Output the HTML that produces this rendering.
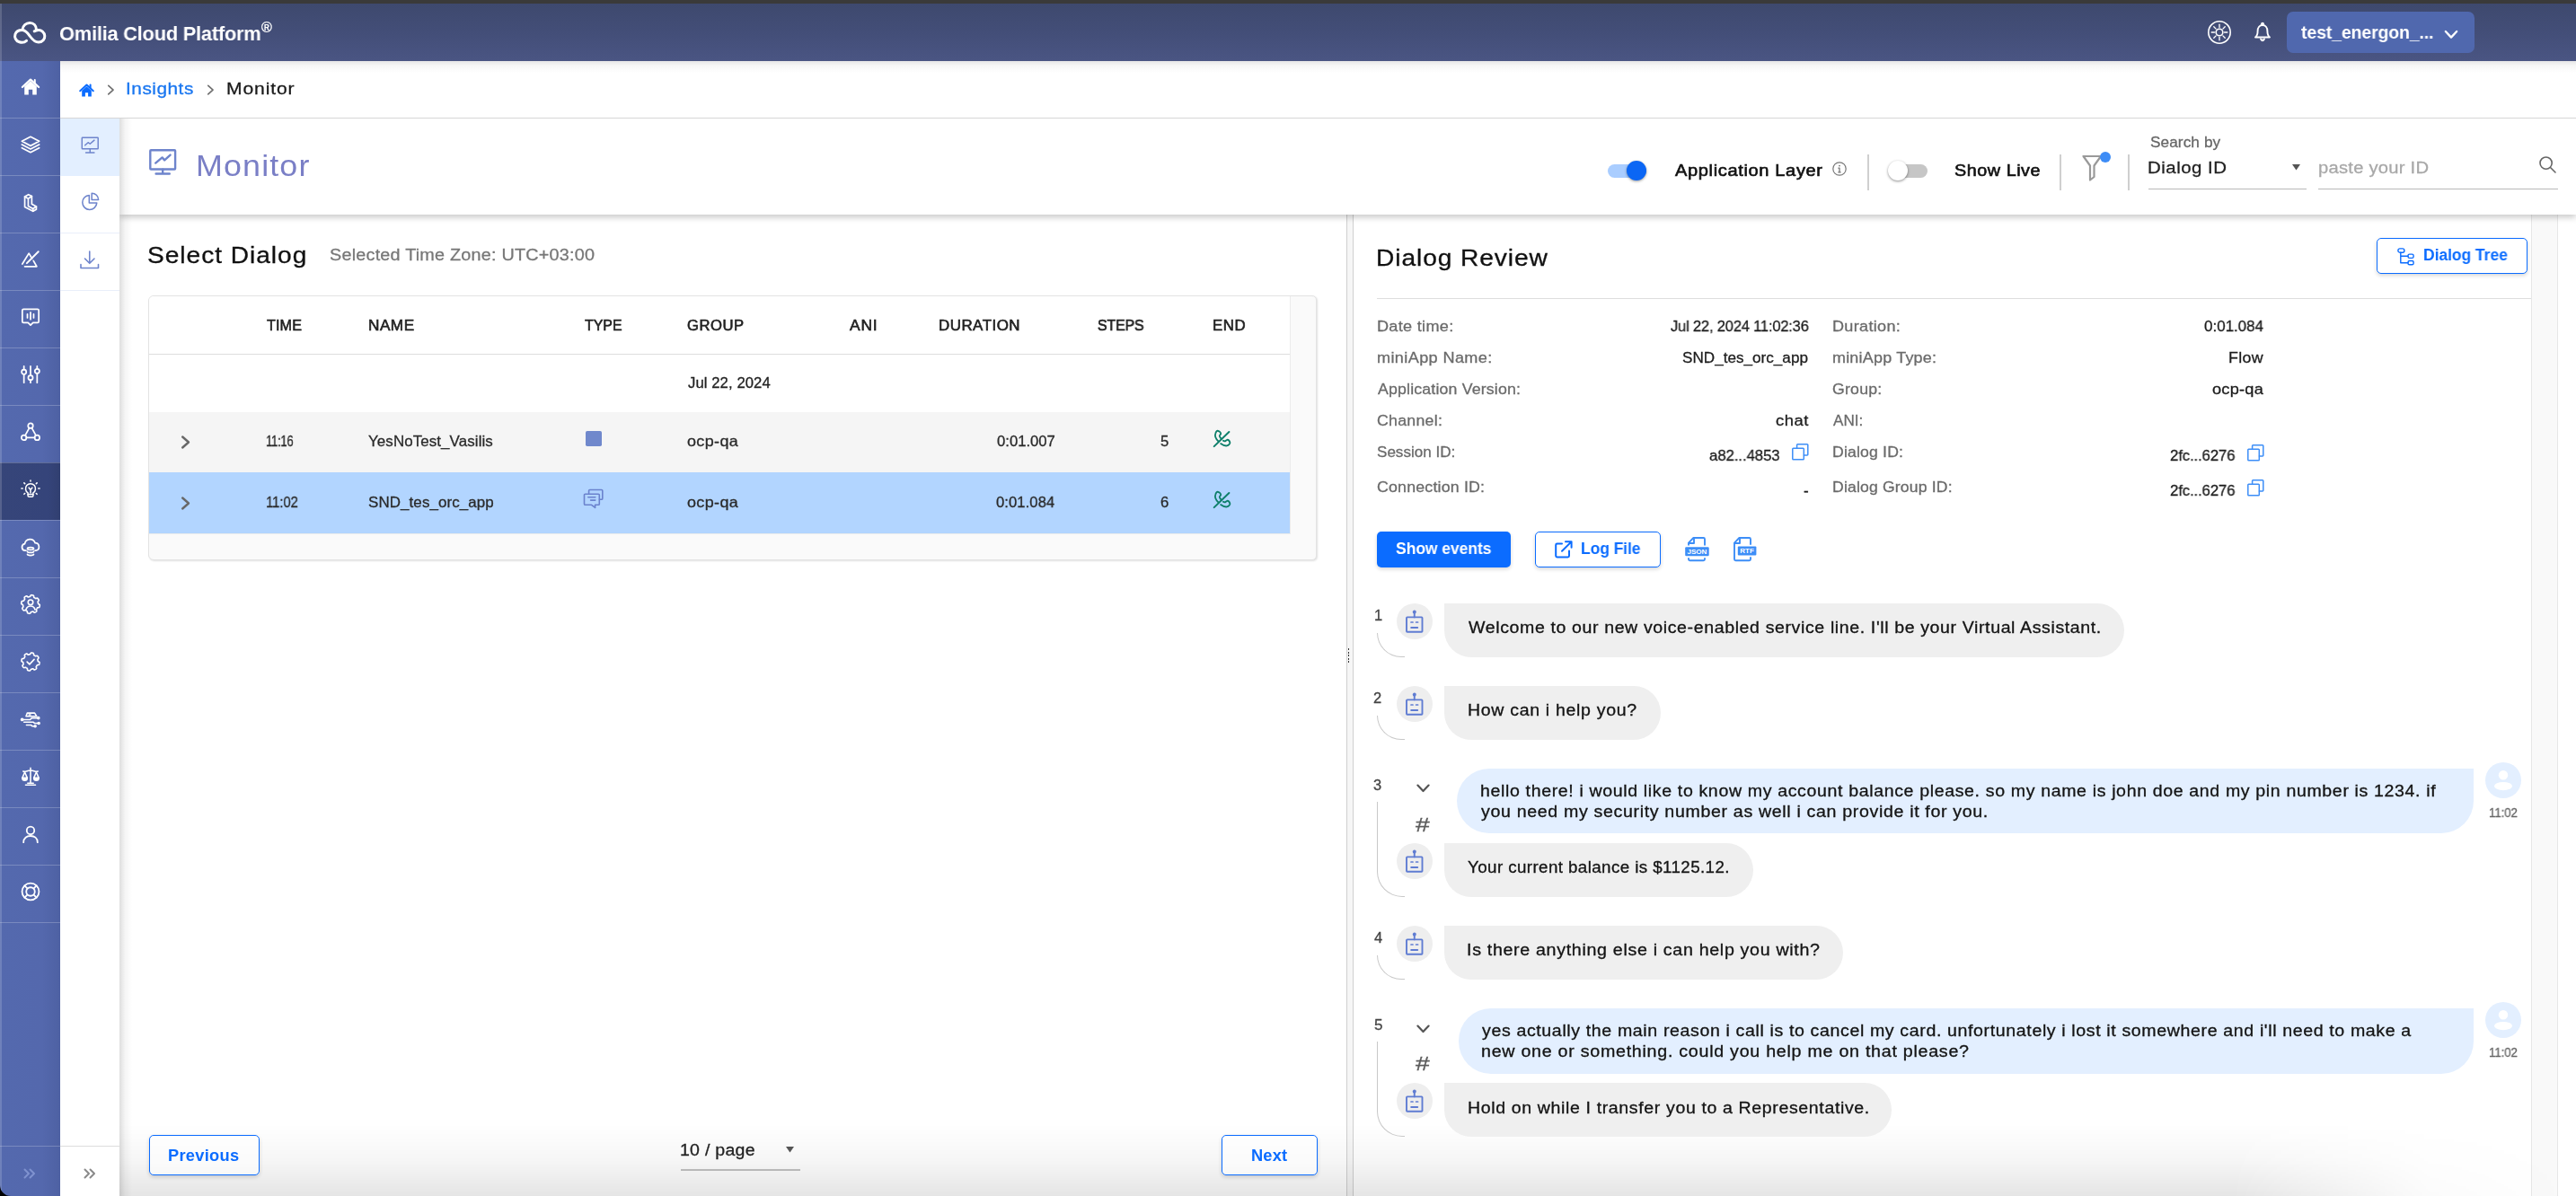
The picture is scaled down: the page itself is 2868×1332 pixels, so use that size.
<!DOCTYPE html>
<html lang="en"><head><meta charset="utf-8"><title>Omilia Cloud Platform - Monitor</title>
<style>
*{box-sizing:border-box}
html,body{margin:0;padding:0}
body{width:2868px;height:1332px;overflow:hidden;background:#fff;position:relative;font-family:"Liberation Sans",sans-serif;color:#222}
.b{position:absolute}
.i{position:absolute;overflow:visible}
.t{position:absolute;will-change:transform;white-space:pre;line-height:1;color:#222;transform-origin:0 0}
.m{-webkit-text-stroke:.3px currentColor}
.m5{-webkit-text-stroke:.6px currentColor}
.topbar{background:linear-gradient(180deg,#3e496e 0%,#434e78 50%,#4a5583 100%)}
.sidebar{background:linear-gradient(90deg,#5469ae 0%,#5468ad 70%,#4e61a3 100%)}
.sdiv{position:absolute;left:0;width:67px;height:1px;background:rgba(255,255,255,.22)}
.s2div{position:absolute;left:67px;width:66px;height:1px;background:#e9eefa}
.hdr{background:#fff;box-shadow:0 3px 7px rgba(0,0,0,.22);clip-path:inset(0 0 -20px 0)}
.vdiv{position:absolute;width:2px;height:40px;top:172px;background:#cfcfcf}
.btn{border-radius:5px;box-shadow:0 2px 4px rgba(0,0,0,.16)}
.btn.o{background:#fff;border:1.25px solid #0b6cff}
.btn.f{background:#0b6cff}
.bub{position:absolute;background:#efefef;border-radius:0 30px 30px 30px}
.bub.u{background:#e3efff;border-radius:36px 0 36px 36px}
.av{position:absolute;width:40px;height:40px;border-radius:50%;background:#eeeeee}
.av.u{background:#e3efff}
.conn{position:absolute;border-left:1.2px solid #c8c8c8;border-bottom:1.2px solid #c8c8c8;border-bottom-left-radius:28px}
</style></head>
<body>
<div class="b " style="left:0px;top:0px;width:2868px;height:4px;background:#3a3a3a"></div>
<div class="b topbar" style="left:0px;top:4px;width:2868px;height:64px;"></div>
<svg class="i" style="left:0px;top:0px;" width="70" height="68" viewBox="0 0 70 68" fill="none" stroke="#fff" stroke-width="3" stroke-linecap="round" stroke-linejoin="round"><path d="M29.5 45.3C27.5 47.2 24 47.6 21.5 46.8C17.5 45.5 15.8 41.5 17 38C18.2 34.8 21.5 33.4 25 33.5C29 33.8 31 37 33.5 40.5C36 44 38.5 47 43 47.1C47.5 47 50 43.5 49.8 40C49.5 36 46 33.2 42.5 33.6C40.8 33.8 39.2 34.3 38.2 34.8"/><path d="M24.8 33.4C25.5 28.5 29 25.4 33.2 25.4C37.5 25.4 40.3 28.5 40.4 32.6"/></svg>
<span class="t" style="left:65.70px;top:27px;font-size:22.6px;letter-spacing:-0.258px;transform:scaleX(0.9681);font-weight:700;color:#fff;">Omilia Cloud Platform</span>
<span class="t m" style="left:291.00px;top:23px;font-size:16.0px;color:#fff;">&#174;</span>
<svg class="i" style="left:2458px;top:23px;" width="26" height="26" viewBox="0 0 26 26" fill="none" stroke="#fff" stroke-width="1.6" stroke-linecap="round" stroke-linejoin="round"><circle cx="13" cy="13" r="12.2"/><circle cx="13" cy="13" r="3.8"/><g stroke-width="1.35"><line x1="18.50" y1="13.00" x2="21.80" y2="13.00"/><line x1="16.89" y1="16.89" x2="19.22" y2="19.22"/><line x1="13.00" y1="18.50" x2="13.00" y2="21.80"/><line x1="9.11" y1="16.89" x2="6.78" y2="19.22"/><line x1="7.50" y1="13.00" x2="4.20" y2="13.00"/><line x1="9.11" y1="9.11" x2="6.78" y2="6.78"/><line x1="13.00" y1="7.50" x2="13.00" y2="4.20"/><line x1="16.89" y1="9.11" x2="19.22" y2="6.78"/></g></svg>
<svg class="i" style="left:2508px;top:24px;" width="22" height="24" viewBox="0 0 22 24" fill="none" stroke="#fff" stroke-width="1.9" stroke-linecap="round" stroke-linejoin="round"><path d="M3 17.5C5 16 5.6 14 5.6 10.5C5.6 6.5 7.8 4 11 4C14.2 4 16.4 6.5 16.4 10.5C16.4 14 17 16 19 17.5Z"/><path d="M9 19.5C9.5 20.8 10.2 21.3 11 21.3C11.8 21.3 12.5 20.8 13 19.5" fill="#fff"/><circle cx="11" cy="2.6" r="1" fill="#fff"/></svg>
<div class="b " style="left:2546px;top:13px;width:209px;height:46px;background:#5068ae;border-radius:7px"></div>
<span class="t" style="left:2562.00px;top:27px;font-size:19.8px;letter-spacing:-0.106px;transform:scaleX(0.9825);font-weight:700;color:#fff;">test_energon_...</span>
<svg class="i" style="left:2721px;top:33px;" width="16" height="11" viewBox="0 0 16 11" fill="none" stroke="#fff" stroke-width="2.3" stroke-linecap="round" stroke-linejoin="round"><path d="M1.8 2L8 8.6L14.2 2"/></svg>
<div class="b sidebar" style="left:0px;top:68px;width:67px;height:1264px;"></div>
<div class="b " style="left:0px;top:515px;width:67px;height:64px;background:linear-gradient(90deg,#364579 0%,#35447a 80%,#313f70 100%)"></div>
<div class="sdiv" style="top:131px"></div>
<div class="sdiv" style="top:195px"></div>
<div class="sdiv" style="top:259px"></div>
<div class="sdiv" style="top:323px"></div>
<div class="sdiv" style="top:387px"></div>
<div class="sdiv" style="top:451px"></div>
<div class="sdiv" style="top:515px"></div>
<div class="sdiv" style="top:579px"></div>
<div class="sdiv" style="top:643px"></div>
<div class="sdiv" style="top:707px"></div>
<div class="sdiv" style="top:771px"></div>
<div class="sdiv" style="top:835px"></div>
<div class="sdiv" style="top:899px"></div>
<div class="sdiv" style="top:963px"></div>
<div class="sdiv" style="top:1027px"></div>
<div class="sdiv" style="top:1276px"></div>
<div class="b " style="left:0px;top:4px;width:2px;height:1328px;background:rgba(255,255,255,.16)"></div>
<svg class="i" style="left:22.5px;top:86px;" width="22" height="22" viewBox="0 0 24 24" fill="none" stroke="#fff" stroke-width="2.4" stroke-linecap="round" stroke-linejoin="round"><path d="M2 12L12 2.8L22 12" /><path d="M4.6 11.3V21.4H9.6V15H14.4V21.4H19.4V11.3L12 4.6Z" fill="#fff" stroke="none"/><path d="M17.2 3.2V7" stroke-width="2.2"/></svg>
<svg class="i" style="left:22.5px;top:150px;" width="22" height="22" viewBox="0 0 24 24" fill="none" stroke="#fff" stroke-width="1.9" stroke-linecap="round" stroke-linejoin="round"><path d="M12 2.5L22.5 8L12 13.5L1.5 8Z"/><path d="M1.5 12L12 17.5L22.5 12"/><path d="M1.5 16L12 21.5L22.5 16"/></svg>
<svg class="i" style="left:22.5px;top:214px;" width="22" height="22" viewBox="0 0 24 24" fill="none" stroke="#fff" stroke-width="1.9" stroke-linecap="round" stroke-linejoin="round"><path d="M5 5.5L9.5 3L13.5 5V14.5L19 17.5V21L15 23.2L5 18Z"/><path d="M5 5.5L9.2 7.8L13.5 5M9.2 7.8V17L15 20.2L19 17.5M15 20.2V23"/></svg>
<svg class="i" style="left:22.5px;top:278px;" width="22" height="22" viewBox="0 0 24 24" fill="none" stroke="#fff" stroke-width="1.9" stroke-linecap="round" stroke-linejoin="round"><path d="M2 17.5L10 4.5L13.8 10.8M15.5 13.5L19.5 20.5H5"/><path d="M7.5 16.5L21.5 2.5" stroke-width="2.2"/></svg>
<svg class="i" style="left:22.5px;top:342px;" width="22" height="22" viewBox="0 0 24 24" fill="none" stroke="#fff" stroke-width="1.9" stroke-linecap="round" stroke-linejoin="round"><path d="M3.5 2.5H20.5A1.5 1.5 0 0 1 22 4V17.5A1.5 1.5 0 0 1 20.5 19H15L12 22L9 19H3.5A1.5 1.5 0 0 1 2 17.5V4A1.5 1.5 0 0 1 3.5 2.5Z"/><path d="M8.2 8.5V13M12 6.5V15M15.8 8.5V13"/></svg>
<svg class="i" style="left:22.5px;top:406px;" width="22" height="22" viewBox="0 0 24 24" fill="none" stroke="#fff" stroke-width="1.9" stroke-linecap="round" stroke-linejoin="round"><path d="M4 2V6M4 12V22M12 2V13M12 19V22M20 2V5M20 11V22"/><circle cx="4" cy="9" r="2.8"/><circle cx="12" cy="16" r="2.8"/><circle cx="20" cy="8" r="2.8"/></svg>
<svg class="i" style="left:22.5px;top:470px;" width="22" height="22" viewBox="0 0 24 24" fill="none" stroke="#fff" stroke-width="1.9" stroke-linecap="round" stroke-linejoin="round"><circle cx="12" cy="4.5" r="3"/><circle cx="4" cy="19" r="3"/><circle cx="20" cy="19" r="3"/><path d="M10.5 7.2L5.5 16.3M13.5 7.2L18.5 16.3M7 19H17"/></svg>
<svg class="i" style="left:22.5px;top:534px;" width="22" height="22" viewBox="0 0 24 24" fill="none" stroke="#fff" stroke-width="1.7" stroke-linecap="round" stroke-linejoin="round"><path d="M8.8 16.2A6 6 0 1 1 15.2 16.2V19.5A1.5 1.5 0 0 1 13.7 21H10.3A1.5 1.5 0 0 1 8.8 19.5Z"/><path d="M10 10L12 12.5L14 10M12 12.5V16M9 18H15"/><path d="M12 1V2.2M4.2 4.2L5.1 5.1M19.8 4.2L18.9 5.1M1 11H2.4M23 11H21.6M4.2 17.8L5.1 16.9M19.8 17.8L18.9 16.9"/></svg>
<svg class="i" style="left:22.5px;top:599px;" width="22" height="22" viewBox="0 0 24 24" fill="none" stroke="#fff" stroke-width="1.9" stroke-linecap="round" stroke-linejoin="round"><path d="M6.5 15.5H5.5A4.2 4.2 0 0 1 5 7.2A6.5 6.5 0 0 1 17.6 6.2A4.7 4.7 0 0 1 18.5 15.5H17.5"/><ellipse cx="12" cy="13" rx="3.8" ry="1.5"/><path d="M8.2 16.5C8.2 18.3 15.8 18.3 15.8 16.5M8.2 20C8.2 21.8 15.8 21.8 15.8 20"/></svg>
<svg class="i" style="left:22.5px;top:662px;" width="22" height="22" viewBox="0 0 24 24" fill="none" stroke="#fff" stroke-width="1.8" stroke-linecap="round" stroke-linejoin="round"><path d="M21.52 15.94 L20.55 16.04 L20.20 16.38 L19.98 16.78 L19.73 17.17 L19.47 17.54 L19.19 17.90 L19.01 18.35 L19.28 19.28 L19.48 20.26 L19.17 20.74 L18.73 21.08 L18.28 21.40 L17.81 21.69 L17.33 21.97 L16.76 22.07 L15.94 21.52 L15.19 20.91 L14.70 20.90 L14.26 21.02 L13.81 21.12 L13.36 21.20 L12.91 21.26 L12.46 21.45 L12.00 22.30 L11.45 23.13 L10.89 23.25 L10.34 23.18 L9.80 23.08 L9.25 22.96 L8.72 22.81 L8.25 22.49 L8.06 21.52 L7.96 20.55 L7.62 20.20 L7.22 19.98 L6.83 19.73 L6.46 19.47 L6.10 19.19 L5.65 19.01 L4.72 19.28 L3.74 19.48 L3.26 19.17 L2.92 18.73 L2.60 18.28 L2.31 17.81 L2.03 17.33 L1.93 16.76 L2.48 15.94 L3.09 15.19 L3.10 14.70 L2.98 14.26 L2.88 13.81 L2.80 13.36 L2.74 12.91 L2.55 12.46 L1.70 12.00 L0.87 11.45 L0.75 10.89 L0.82 10.34 L0.92 9.80 L1.04 9.25 L1.19 8.72 L1.51 8.25 L2.48 8.06 L3.45 7.96 L3.80 7.62 L4.02 7.22 L4.27 6.83 L4.53 6.46 L4.81 6.10 L4.99 5.65 L4.72 4.72 L4.52 3.74 L4.83 3.26 L5.27 2.92 L5.72 2.60 L6.19 2.31 L6.67 2.03 L7.24 1.93 L8.06 2.48 L8.81 3.09 L9.30 3.10 L9.74 2.98 L10.19 2.88 L10.64 2.80 L11.09 2.74 L11.54 2.55 L12.00 1.70 L12.55 0.87 L13.11 0.75 L13.66 0.82 L14.20 0.92 L14.75 1.04 L15.28 1.19 L15.75 1.51 L15.94 2.48 L16.04 3.45 L16.38 3.80 L16.78 4.02 L17.17 4.27 L17.54 4.53 L17.90 4.81 L18.35 4.99 L19.28 4.72 L20.26 4.52 L20.74 4.83 L21.08 5.27 L21.40 5.72 L21.69 6.19 L21.97 6.67 L22.07 7.24 L21.52 8.06 L20.91 8.81 L20.90 9.30 L21.02 9.74 L21.12 10.19 L21.20 10.64 L21.26 11.09 L21.45 11.54 L22.30 12.00 L23.13 12.55 L23.25 13.11 L23.18 13.66 L23.08 14.20 L22.96 14.75 L22.81 15.28 L22.49 15.75 L21.52 15.94Z"/><circle cx="12" cy="9.5" r="3"/><path d="M6.5 18.5C7.5 15 9.5 14.2 12 14.2C14.5 14.2 16.5 15 17.5 18.5"/></svg>
<svg class="i" style="left:22.5px;top:726px;" width="22" height="22" viewBox="0 0 24 24" fill="none" stroke="#fff" stroke-width="1.8" stroke-linecap="round" stroke-linejoin="round"><path d="M21.24 15.83 L20.28 15.92 L19.94 16.24 L19.72 16.63 L19.48 17.00 L19.23 17.36 L18.96 17.71 L18.79 18.15 L19.07 19.07 L19.28 20.03 L18.98 20.50 L18.55 20.84 L18.11 21.15 L17.66 21.44 L17.19 21.70 L16.64 21.80 L15.83 21.24 L15.09 20.62 L14.61 20.61 L14.19 20.73 L13.76 20.83 L13.32 20.90 L12.88 20.96 L12.45 21.15 L12.00 22.00 L11.47 22.83 L10.92 22.95 L10.39 22.88 L9.85 22.79 L9.33 22.67 L8.81 22.53 L8.35 22.21 L8.17 21.24 L8.08 20.28 L7.76 19.94 L7.37 19.72 L7.00 19.48 L6.64 19.23 L6.29 18.96 L5.85 18.79 L4.93 19.07 L3.97 19.28 L3.50 18.98 L3.16 18.55 L2.85 18.11 L2.56 17.66 L2.30 17.19 L2.20 16.64 L2.76 15.83 L3.38 15.09 L3.39 14.61 L3.27 14.19 L3.17 13.76 L3.10 13.32 L3.04 12.88 L2.85 12.45 L2.00 12.00 L1.17 11.47 L1.05 10.92 L1.12 10.39 L1.21 9.85 L1.33 9.33 L1.47 8.81 L1.79 8.35 L2.76 8.17 L3.72 8.08 L4.06 7.76 L4.28 7.37 L4.52 7.00 L4.77 6.64 L5.04 6.29 L5.21 5.85 L4.93 4.93 L4.72 3.97 L5.02 3.50 L5.45 3.16 L5.89 2.85 L6.34 2.56 L6.81 2.30 L7.36 2.20 L8.17 2.76 L8.91 3.38 L9.39 3.39 L9.81 3.27 L10.24 3.17 L10.68 3.10 L11.12 3.04 L11.55 2.85 L12.00 2.00 L12.53 1.17 L13.08 1.05 L13.61 1.12 L14.15 1.21 L14.67 1.33 L15.19 1.47 L15.65 1.79 L15.83 2.76 L15.92 3.72 L16.24 4.06 L16.63 4.28 L17.00 4.52 L17.36 4.77 L17.71 5.04 L18.15 5.21 L19.07 4.93 L20.03 4.72 L20.50 5.02 L20.84 5.45 L21.15 5.89 L21.44 6.34 L21.70 6.81 L21.80 7.36 L21.24 8.17 L20.62 8.91 L20.61 9.39 L20.73 9.81 L20.83 10.24 L20.90 10.68 L20.96 11.12 L21.15 11.55 L22.00 12.00 L22.83 12.53 L22.95 13.08 L22.88 13.61 L22.79 14.15 L22.67 14.67 L22.53 15.19 L22.21 15.65 L21.24 15.83Z"/><path d="M7.8 12.2L10.8 15.2L16.4 9.2"/></svg>
<svg class="i" style="left:22.5px;top:790px;" width="22" height="22" viewBox="0 0 24 24" fill="none" stroke="#fff" stroke-width="1.7" stroke-linecap="round" stroke-linejoin="round"><path d="M8 4.5H17L19.5 8.5H6.5Z"/><path d="M10 6.5H12M1.5 12.5H11.5L13.5 10.5H20.5M4 15.5H15.5L17 17H21M7 19H12.5L14 20.5H16.5"/><circle cx="1.8" cy="12.5" r="1.2" fill="#fff"/><circle cx="21.6" cy="10.5" r="1.1"/><circle cx="22" cy="17" r="1.1"/><circle cx="17.6" cy="20.5" r="1.1"/></svg>
<svg class="i" style="left:22.5px;top:854px;" width="22" height="22" viewBox="0 0 24 24" fill="none" stroke="#fff" stroke-width="1.7" stroke-linecap="round" stroke-linejoin="round"><path d="M12 1.5V20M6 22H18M8.5 20H15.5M3 5.5C6 6.5 9 4 12 4.5C15 4 18 6.5 21 5.5"/><path d="M5 6.5L2 13.5H8ZM19 6.5L16 13.5H22Z"/><path d="M2 13.5A3 3 0 0 0 8 13.5M16 13.5A3 3 0 0 0 22 13.5" fill="#fff"/></svg>
<svg class="i" style="left:22.5px;top:918px;" width="22" height="22" viewBox="0 0 24 24" fill="none" stroke="#fff" stroke-width="2" stroke-linecap="round" stroke-linejoin="round"><circle cx="12" cy="7.5" r="4.6"/><path d="M3.5 22C3.5 16.5 7.5 14.2 12 14.2C16.5 14.2 20.5 16.5 20.5 22"/></svg>
<svg class="i" style="left:22.5px;top:982px;" width="22" height="22" viewBox="0 0 24 24" fill="none" stroke="#fff" stroke-width="2" stroke-linecap="round" stroke-linejoin="round"><circle cx="12" cy="12" r="10.3"/><circle cx="12" cy="12" r="5.2"/><path d="M4.8 4.8L8.3 8.3M19.2 4.8L15.7 8.3M4.8 19.2L8.3 15.7M19.2 19.2L15.7 15.7"/></svg>
<svg class="i" style="left:26px;top:1301px;" width="14" height="12" viewBox="0 0 14 12" fill="none" stroke="#7f92cf" stroke-width="2" stroke-linecap="round" stroke-linejoin="round"><path d="M1.5 1.5L6 6L1.5 10.5M7.5 1.5L12 6L7.5 10.5"/></svg>
<div class="b " style="left:67px;top:68px;width:2801px;height:63px;background:linear-gradient(180deg,#e6e6e6 0px,#f6f6f6 5px,#fff 13px)"></div>
<div class="b " style="left:67px;top:130.5px;width:2801px;height:1.5px;background:#d6d6d6"></div>
<svg class="i" style="left:87.5px;top:92.5px;" width="17" height="15" viewBox="0 0 17 15" fill="none" stroke="#0b6cff" stroke-width="2" stroke-linecap="round" stroke-linejoin="round"><path d="M1.2 8.2L8.5 1.5L15.8 8.2"/><path d="M3.2 7.9V14.6H6.9V10.2H10.1V14.6H13.8V7.9L8.5 3.2Z" fill="#0b6cff" stroke="none"/><path d="M12.6 1.6V4.4"/></svg>
<svg class="i" style="left:118.6px;top:93.8px;" width="8.8" height="12.3" viewBox="0 0 10 14" fill="none" stroke="#707070" stroke-width="1.9" stroke-linecap="round" stroke-linejoin="round"><path d="M2 1.5L8 7L2 12.5"/></svg>
<span class="t m" style="left:140.00px;top:89px;font-size:19.21px;letter-spacing:0.474px;transform:scaleX(1.0844);color:#1976f0;">Insights</span>
<svg class="i" style="left:229.6px;top:93.8px;" width="8.8" height="12.3" viewBox="0 0 10 14" fill="none" stroke="#707070" stroke-width="1.9" stroke-linecap="round" stroke-linejoin="round"><path d="M2 1.5L8 7L2 12.5"/></svg>
<span class="t m" style="left:251.50px;top:89px;font-size:19.21px;letter-spacing:0.788px;transform:scaleX(1.1000);color:#1a1a1a;">Monitor</span>
<div class="b " style="left:67px;top:132px;width:66px;height:1200px;background:#fff"></div>
<div class="b " style="left:67px;top:132px;width:66px;height:63.8px;background:#e3efff"></div>
<div class="s2div" style="top:259px"></div>
<div class="s2div" style="top:323px"></div>
<div class="b " style="left:67px;top:1276px;width:66px;height:1px;background:#dcdcdc"></div>
<svg class="i" style="left:89.5px;top:151.5px;" width="20.5" height="19" viewBox="0 0 24 22.2" fill="none" stroke="#6e84cc" stroke-width="1.7" stroke-linecap="round" stroke-linejoin="round"><rect x="1.5" y="1.5" width="21" height="14.5" rx="0.6"/><path d="M12 16V20.5M6.5 21H17.5"/><path d="M5.5 11.5L9.5 7.8L12 9.6L17.5 4.8"/></svg>
<svg class="i" style="left:89.5px;top:214px;" width="21" height="20.5" viewBox="0 0 21.5 21.5" fill="none" stroke="#6e84cc" stroke-width="1.6" stroke-linecap="round" stroke-linejoin="round"><path d="M9.5 3.6A8.4 8.4 0 1 0 18.4 12.5H9.5Z"/><path d="M12.5 1.2A7.8 7.8 0 0 1 20.3 9H12.5Z"/></svg>
<svg class="i" style="left:89px;top:279px;" width="21.5" height="20.5" viewBox="0 0 21.5 20.5" fill="none" stroke="#6e84cc" stroke-width="1.6" stroke-linecap="round" stroke-linejoin="round"><path d="M10.75 1V14M5.5 9L10.75 14.3L16 9"/><path d="M1 15.5V19.5H20.5V15.5"/></svg>
<svg class="i" style="left:93px;top:1301px;" width="14" height="12" viewBox="0 0 14 12" fill="none" stroke="#8a8a8a" stroke-width="2" stroke-linecap="round" stroke-linejoin="round"><path d="M1.5 1.5L6 6L1.5 10.5M7.5 1.5L12 6L7.5 10.5"/></svg>
<div class="b " style="left:133px;top:239px;width:2735px;height:1093px;background:#fff"></div>
<div class="b " style="left:2818px;top:239px;width:30px;height:1093px;background:#f9f9f9;border-left:1.5px solid #e7e7e7;border-right:1.5px solid #e7e7e7"></div>
<div class="b " style="left:1499px;top:239px;width:8px;height:1093px;background:#f6f6f6;border-left:1.3px solid #cfcfcf;border-right:1.3px solid #cfcfcf"></div>
<div class="b hdr" style="left:133px;top:132px;width:2735px;height:107px;"></div>
<svg class="i" style="left:165.8px;top:166.3px;" width="30.4" height="28.8" viewBox="0 0 30.4 28.8" fill="none" stroke="#6e84cc" stroke-width="2.4" stroke-linecap="round" stroke-linejoin="round"><rect x="1.3" y="1.3" width="27.8" height="21.2" rx="0.8"/><path d="M15.2 22.6V27M7.6 27.5H22.8"/><path d="M7.2 15.6L14.6 9.4L17.2 12.4L23.6 6.6"/></svg>
<span class="t" style="left:218.20px;top:169px;font-size:32.6px;letter-spacing:1.017px;transform:scaleX(1.1017);color:#7a7fc6;">Monitor</span>
<div class="b " style="left:1790px;top:182.5px;width:43px;height:15px;background:#a9cdff;border-radius:8px"></div>
<div class="b " style="left:1811px;top:178.7px;width:22px;height:22px;background:#0b66f4;border-radius:50%;box-shadow:0 1px 3px rgba(0,0,0,.4)"></div>
<span class="t m5" style="left:1865.00px;top:181px;font-size:18.14px;letter-spacing:0.564px;transform:scaleX(1.1079);color:#111;">Application Layer</span>
<svg class="i" style="left:2040px;top:180px;" width="16" height="16" viewBox="0 0 16 16" fill="none" stroke="#777" stroke-width="1.2" stroke-linecap="round" stroke-linejoin="round"><circle cx="8" cy="8" r="7.2"/><path d="M8 7.2V11.6M6.8 11.8H9.2M6.9 7.2H8" stroke-width="1.3"/><circle cx="8" cy="4.6" r="0.9" fill="#777" stroke="none"/></svg>
<div class="vdiv" style="left:2079px"></div>
<div class="b " style="left:2102.5px;top:182.5px;width:43px;height:15px;background:#c6c6c6;border-radius:8px"></div>
<div class="b " style="left:2101.5px;top:178.7px;width:22px;height:22px;background:#fff;border-radius:50%;box-shadow:0 1px 3px rgba(0,0,0,.45)"></div>
<span class="t m5" style="left:2176.00px;top:181px;font-size:18.14px;letter-spacing:0.505px;transform:scaleX(1.0896);color:#111;">Show Live</span>
<div class="vdiv" style="left:2293px"></div>
<svg class="i" style="left:2318px;top:172px;" width="24" height="30" viewBox="0 0 24 30" fill="none" stroke="#999" stroke-width="2.2" stroke-linecap="round" stroke-linejoin="round"><path d="M1.5 2H21L13.5 12.5V25L9 28.5V12.5Z"/></svg>
<div class="b " style="left:2338px;top:169px;width:12px;height:12px;background:#3d8cf6;border-radius:50%"></div>
<div class="vdiv" style="left:2369px"></div>
<span class="t m" style="left:2394.00px;top:151px;font-size:16.88px;letter-spacing:0.093px;transform:scaleX(1.0192);color:#666;">Search by</span>
<span class="t m" style="left:2391.00px;top:177px;font-size:19.21px;letter-spacing:0.494px;transform:scaleX(1.0623);">Dialog ID</span>
<svg class="i" style="left:2552px;top:183px;" width="9" height="7" viewBox="0 0 9 7" fill="none" stroke-linecap="round" stroke-linejoin="round"><path d="M0 0H9L4.5 6.4Z" fill="#555"/></svg>
<div class="b " style="left:2392px;top:209.5px;width:175.5px;height:1.3px;background:#b8b8b8"></div>
<span class="t m" style="left:2581.40px;top:177px;font-size:19.21px;letter-spacing:0.241px;transform:scaleX(1.0514);color:#a8a8a8;">paste your ID</span>
<div class="b " style="left:2581px;top:209.5px;width:267px;height:1.3px;background:#b8b8b8"></div>
<svg class="i" style="left:2826.5px;top:174px;" width="19" height="19" viewBox="0 0 19 19" fill="none" stroke="#666" stroke-width="1.6" stroke-linecap="round" stroke-linejoin="round"><circle cx="7.6" cy="7.6" r="6.6"/><path d="M12.5 12.5L18 18"/></svg>
<div class="b " style="left:133px;top:132px;width:14px;height:1200px;background:linear-gradient(90deg,rgba(0,0,0,.13),rgba(0,0,0,.04) 45%,rgba(0,0,0,0));pointer-events:none"></div>
<span class="t m" style="left:164.20px;top:272px;font-size:25.61px;letter-spacing:0.877px;transform:scaleX(1.0983);color:#111;">Select Dialog</span>
<span class="t m" style="left:367.00px;top:274px;font-size:19.21px;letter-spacing:0.208px;transform:scaleX(1.0324);color:#777;">Selected Time Zone: UTC+03:00</span>
<div class="b " style="left:164.8px;top:329px;width:1301.2px;height:294.5px;background:#fafafa;border:1px solid #e3e3e3;border-radius:6px 5px 5px 6px;box-shadow:1px 1px 2px rgba(0,0,0,.12);overflow:hidden"><div class="b " style="left:0px;top:0px;width:1270.7px;height:64.7px;background:#fff;border-bottom:1.3px solid #dedede"></div><div class="b " style="left:0px;top:64.7px;width:1270.7px;height:64.3px;background:#fff"></div><div class="b " style="left:0px;top:129px;width:1270.7px;height:67px;background:#f5f5f5"></div><div class="b " style="left:0px;top:196px;width:1270.7px;height:68px;background:#b2d5ff"></div><div class="b " style="left:1270.7px;top:0px;width:1px;height:264px;background:#ececec"></div><div class="b " style="left:0px;top:264px;width:1271.7px;height:1px;background:#ececec"></div></div>
<span class="t m5" style="left:297.00px;top:355px;font-size:15.91px;letter-spacing:0.131px;transform:scaleX(1.0158);">TIME</span>
<span class="t m5" style="left:409.60px;top:355px;font-size:15.91px;letter-spacing:0.431px;transform:scaleX(1.0818);">NAME</span>
<span class="t m5" style="left:650.60px;top:355px;font-size:15.91px;">TYPE</span>
<span class="t m5" style="left:764.50px;top:355px;font-size:15.91px;letter-spacing:0.526px;transform:scaleX(1.0447);">GROUP</span>
<span class="t m5" style="left:946.00px;top:355px;font-size:15.91px;letter-spacing:0.730px;transform:scaleX(1.0960);">ANI</span>
<span class="t m5" style="left:1045.00px;top:355px;font-size:15.91px;letter-spacing:0.457px;transform:scaleX(1.0637);">DURATION</span>
<span class="t m5" style="left:1221.50px;top:355px;font-size:15.91px;letter-spacing:-0.050px;transform:scaleX(0.9941);">STEPS</span>
<span class="t m5" style="left:1350.00px;top:355px;font-size:15.91px;letter-spacing:0.568px;transform:scaleX(1.0562);">END</span>
<span class="t m" style="left:765.50px;top:418px;font-size:16.1px;letter-spacing:0.088px;transform:scaleX(1.0345);">Jul 22, 2024</span>
<svg class="i" style="left:201px;top:485px;" width="12" height="15" viewBox="0 0 12 15" fill="none" stroke="#686868" stroke-width="2.4" stroke-linecap="round" stroke-linejoin="round"><path d="M2.2 1.5L9 7.5L2.2 13.5"/></svg>
<span class="t m" style="left:296.00px;top:484px;font-size:16.68px;letter-spacing:-0.449px;transform:scaleX(0.7929);color:#2a2a2a;">11:16</span>
<span class="t m" style="left:409.50px;top:484px;font-size:16.68px;letter-spacing:0.086px;transform:scaleX(1.0157);color:#2a2a2a;">YesNoTest_Vasilis</span>
<div class="b " style="left:652px;top:479.7px;width:17.5px;height:17.7px;background:#7088cc;border-radius:1.8px"></div>
<span class="t m" style="left:764.50px;top:484px;font-size:16.68px;letter-spacing:0.372px;transform:scaleX(1.0750);color:#2a2a2a;">ocp-qa</span>
<span class="t m" style="left:1110.00px;top:484px;font-size:16.68px;color:#2a2a2a;">0:01.007</span>
<span class="t m" style="left:1292.00px;top:484px;font-size:16.68px;color:#2a2a2a;">5</span>
<svg class="i" style="left:201px;top:553px;" width="12" height="15" viewBox="0 0 12 15" fill="none" stroke="#686868" stroke-width="2.4" stroke-linecap="round" stroke-linejoin="round"><path d="M2.2 1.5L9 7.5L2.2 13.5"/></svg>
<span class="t m" style="left:296.00px;top:552px;font-size:16.68px;letter-spacing:-0.187px;transform:scaleX(0.9019);color:#2a2a2a;">11:02</span>
<span class="t m" style="left:409.50px;top:552px;font-size:16.68px;letter-spacing:0.098px;transform:scaleX(1.0156);color:#2a2a2a;">SND_tes_orc_app</span>
<svg class="i" style="left:650px;top:545px;" width="22" height="21" viewBox="0 0 22 21" fill="none" stroke="#6a82cd" stroke-width="1.6" stroke-linecap="round" stroke-linejoin="round"><path d="M5.6 4.6V1.6A1.1 1.1 0 0 1 6.7 0.5H19.7A1.1 1.1 0 0 1 20.8 1.6V10.2A1.1 1.1 0 0 1 19.7 11.3H17.5"/><path d="M1.6 5.2H16.2A1.1 1.1 0 0 1 17.3 6.3V16.2A1.1 1.1 0 0 1 16.2 17.3H12.6V20.4L8.6 17.3H1.6A1.1 1.1 0 0 1 0.5 16.2V6.3A1.1 1.1 0 0 1 1.6 5.2Z"/><path d="M4.8 8.7H12.8M7.6 12.1H12.8"/></svg>
<span class="t m" style="left:764.50px;top:552px;font-size:16.68px;letter-spacing:0.372px;transform:scaleX(1.0750);color:#2a2a2a;">ocp-qa</span>
<span class="t m" style="left:1109.00px;top:552px;font-size:16.68px;letter-spacing:0.057px;transform:scaleX(0.9977);color:#2a2a2a;">0:01.084</span>
<span class="t m" style="left:1291.50px;top:552px;font-size:16.68px;color:#2a2a2a;">6</span>
<svg class="i" style="left:1350px;top:478px;" width="22" height="22" viewBox="0 0 22 22" fill="none" stroke="#0e7f6a" stroke-width="1.8" stroke-linecap="round" stroke-linejoin="round"><path d="M1.7 19.1L18.4 3" stroke-width="2"/><path d="M6.4 13.4C3.5 10.5 2.5 7 3.2 5C3.8 2.8 5 1.5 6 1.8C7.5 2.3 9.5 3.8 9.2 5C9 6.2 7.5 6.8 7.8 7.8C8.2 9 9 10 9.8 10.8"/><path d="M9.1 16.1C11.5 17.8 14 18.8 16 18.4C18 18 19.6 16 19.4 15C19 13 17.5 11.4 16.2 11.8C15 12.2 14.3 13.6 13.4 13.4C12.8 13.3 12.3 13 11.9 12.7"/></svg>
<svg class="i" style="left:1350px;top:545.5px;" width="22" height="22" viewBox="0 0 22 22" fill="none" stroke="#0e7f6a" stroke-width="1.8" stroke-linecap="round" stroke-linejoin="round"><path d="M1.7 19.1L18.4 3" stroke-width="2"/><path d="M6.4 13.4C3.5 10.5 2.5 7 3.2 5C3.8 2.8 5 1.5 6 1.8C7.5 2.3 9.5 3.8 9.2 5C9 6.2 7.5 6.8 7.8 7.8C8.2 9 9 10 9.8 10.8"/><path d="M9.1 16.1C11.5 17.8 14 18.8 16 18.4C18 18 19.6 16 19.4 15C19 13 17.5 11.4 16.2 11.8C15 12.2 14.3 13.6 13.4 13.4C12.8 13.3 12.3 13 11.9 12.7"/></svg>
<div class="b " style="left:133px;top:1252px;width:2735px;height:80px;background:linear-gradient(180deg,rgba(0,0,0,0),rgba(0,0,0,.035) 50%,rgba(0,0,0,.1));-webkit-mask-image:linear-gradient(90deg,#000 0,#000 86%,rgba(0,0,0,.15) 94%,rgba(0,0,0,0) 100%);mask-image:linear-gradient(90deg,#000 0,#000 86%,rgba(0,0,0,.15) 94%,rgba(0,0,0,0) 100%);pointer-events:none"></div>
<div class="b btn o" style="left:165.5px;top:1264px;width:123px;height:44.5px;background:rgba(255,255,255,.55)"></div>
<span class="t" style="left:187.00px;top:1279px;font-size:17.6px;letter-spacing:0.281px;transform:scaleX(1.0378);font-weight:700;color:#0b6cff;">Previous</span>
<span class="t m" style="left:757.00px;top:1272px;font-size:18.82px;letter-spacing:0.241px;transform:scaleX(1.0390);">10 / page</span>
<svg class="i" style="left:875px;top:1277px;" width="9" height="7" viewBox="0 0 9 7" fill="none" stroke-linecap="round" stroke-linejoin="round"><path d="M0 0H9L4.5 6.4Z" fill="#555"/></svg>
<div class="b " style="left:758px;top:1302.3px;width:133px;height:1.3px;background:#b8b8b8"></div>
<div class="b btn o" style="left:1360px;top:1264px;width:106.5px;height:44.5px;background:rgba(255,255,255,.55)"></div>
<span class="t" style="left:1392.50px;top:1279px;font-size:17.6px;letter-spacing:0.167px;transform:scaleX(1.0373);font-weight:700;color:#0b6cff;">Next</span>
<div class="b " style="left:1500.5px;top:722px;width:1.6px;height:18px;background:repeating-linear-gradient(180deg,#333 0 2px,rgba(0,0,0,0) 2px 3.6px)"></div>
<span class="t m" style="left:1532.00px;top:275px;font-size:25.61px;letter-spacing:0.818px;transform:scaleX(1.1000);color:#111;">Dialog Review</span>
<div class="b btn o" style="left:2646px;top:265.2px;width:168px;height:39.5px;"></div>
<svg class="i" style="left:2668.5px;top:275.5px;" width="19" height="20" viewBox="0 0 19 20" fill="none" stroke="#0b6cff" stroke-width="1.4" stroke-linecap="round" stroke-linejoin="round"><rect x="0.9" y="0.9" width="7" height="4.3" rx="2"/><path d="M3.8 5.3V16.7H12M3.8 9.3H12"/><rect x="12" y="7.1" width="6.1" height="4.3" rx="1.6"/><rect x="12" y="14.5" width="6.1" height="4.3" rx="1.6"/></svg>
<span class="t" style="left:2697.90px;top:276px;font-size:17.6px;letter-spacing:-0.040px;transform:scaleX(0.9935);font-weight:700;color:#0b6cff;">Dialog Tree</span>
<div class="b " style="left:1533px;top:332px;width:1285px;height:1.1px;background:#dedede"></div>
<span class="t m" style="left:1533.00px;top:355px;font-size:17.07px;letter-spacing:0.272px;transform:scaleX(1.0620);color:#6a6a6a;">Date time:</span>
<span class="t m" style="left:1533.00px;top:390px;font-size:17.07px;letter-spacing:0.361px;transform:scaleX(1.0605);color:#6a6a6a;">miniApp Name:</span>
<span class="t m" style="left:1534.00px;top:425px;font-size:17.07px;letter-spacing:0.152px;transform:scaleX(1.0405);color:#6a6a6a;">Application Version:</span>
<span class="t m" style="left:1533.00px;top:460px;font-size:17.07px;letter-spacing:0.247px;transform:scaleX(1.0409);color:#6a6a6a;">Channel:</span>
<span class="t m" style="left:1533.00px;top:495px;font-size:17.07px;color:#6a6a6a;">Session ID:</span>
<span class="t m" style="left:1533.00px;top:534px;font-size:17.07px;letter-spacing:0.162px;transform:scaleX(1.0436);color:#6a6a6a;">Connection ID:</span>
<span class="t m" style="left:2039.75px;top:355px;font-size:17.07px;letter-spacing:0.307px;transform:scaleX(1.0582);color:#6a6a6a;">Duration:</span>
<span class="t m" style="left:2039.75px;top:390px;font-size:17.07px;letter-spacing:0.206px;transform:scaleX(1.0514);color:#6a6a6a;">miniApp Type:</span>
<span class="t m" style="left:2039.75px;top:425px;font-size:17.07px;letter-spacing:0.232px;transform:scaleX(1.0360);color:#6a6a6a;">Group:</span>
<span class="t m" style="left:2040.75px;top:460px;font-size:17.07px;color:#6a6a6a;">ANI:</span>
<span class="t m" style="left:2039.75px;top:495px;font-size:17.07px;letter-spacing:0.172px;transform:scaleX(1.0329);color:#6a6a6a;">Dialog ID:</span>
<span class="t m" style="left:2039.75px;top:534px;font-size:17.07px;letter-spacing:0.168px;transform:scaleX(1.0312);color:#6a6a6a;">Dialog Group ID:</span>
<span class="t m" style="left:1860.00px;top:355px;font-size:17.07px;letter-spacing:-0.186px;transform:scaleX(0.9667);color:#1c1c1c;">Jul 22, 2024 11:02:36</span>
<span class="t m" style="left:1873.00px;top:390px;font-size:17.07px;letter-spacing:0.014px;transform:scaleX(1.0022);color:#1c1c1c;">SND_tes_orc_app</span>
<span class="t m" style="left:1977.00px;top:460px;font-size:17.07px;letter-spacing:0.495px;transform:scaleX(1.0774);color:#1c1c1c;">chat</span>
<span class="t m" style="left:1903.00px;top:499px;font-size:17.07px;letter-spacing:-0.090px;transform:scaleX(0.9848);color:#1c1c1c;">a82...4853</span>
<span class="t m" style="left:2008.00px;top:538px;font-size:17.07px;color:#1c1c1c;">-</span>
<span class="t m" style="left:2454.00px;top:355px;font-size:17.07px;letter-spacing:-0.029px;transform:scaleX(0.9954);color:#1c1c1c;">0:01.084</span>
<span class="t m" style="left:2481.00px;top:390px;font-size:17.07px;letter-spacing:0.320px;transform:scaleX(1.0429);color:#1c1c1c;">Flow</span>
<span class="t m" style="left:2463.00px;top:425px;font-size:17.07px;letter-spacing:0.225px;transform:scaleX(1.0647);color:#1c1c1c;">ocp-qa</span>
<span class="t m" style="left:2415.50px;top:499px;font-size:17.07px;letter-spacing:-0.113px;transform:scaleX(0.9795);color:#1c1c1c;">2fc...6276</span>
<span class="t m" style="left:2415.50px;top:538px;font-size:17.07px;letter-spacing:-0.113px;transform:scaleX(0.9795);color:#1c1c1c;">2fc...6276</span>
<svg class="i" style="left:1994.7px;top:494px;" width="18.6" height="18.6" viewBox="0 0 18.6 18.6" fill="none" stroke="#3d8ef7" stroke-width="1.5" stroke-linecap="round" stroke-linejoin="round"><path d="M5.6 5.2V1.6A0.8 0.8 0 0 1 6.4 0.8H17A0.8 0.8 0 0 1 17.8 1.6V12.2A0.8 0.8 0 0 1 17 13H13.4"/><rect x="0.8" y="5.3" width="12.5" height="12.5" rx="0.8"/></svg>
<svg class="i" style="left:2501.5px;top:494.5px;" width="18.6" height="18.6" viewBox="0 0 18.6 18.6" fill="none" stroke="#3d8ef7" stroke-width="1.5" stroke-linecap="round" stroke-linejoin="round"><path d="M5.6 5.2V1.6A0.8 0.8 0 0 1 6.4 0.8H17A0.8 0.8 0 0 1 17.8 1.6V12.2A0.8 0.8 0 0 1 17 13H13.4"/><rect x="0.8" y="5.3" width="12.5" height="12.5" rx="0.8"/></svg>
<svg class="i" style="left:2501.5px;top:533.5px;" width="18.6" height="18.6" viewBox="0 0 18.6 18.6" fill="none" stroke="#3d8ef7" stroke-width="1.5" stroke-linecap="round" stroke-linejoin="round"><path d="M5.6 5.2V1.6A0.8 0.8 0 0 1 6.4 0.8H17A0.8 0.8 0 0 1 17.8 1.6V12.2A0.8 0.8 0 0 1 17 13H13.4"/><rect x="0.8" y="5.3" width="12.5" height="12.5" rx="0.8"/></svg>
<div class="b btn f" style="left:1533px;top:592px;width:149px;height:40px;"></div>
<span class="t" style="left:1554.00px;top:603px;font-size:17.6px;letter-spacing:-0.040px;transform:scaleX(0.9943);font-weight:700;color:#fff;">Show events</span>
<div class="b btn o" style="left:1709.2px;top:592px;width:139.5px;height:40px;"></div>
<svg class="i" style="left:1730.5px;top:601.5px;" width="20" height="20" viewBox="0 0 20 20" fill="none" stroke="#0b6cff" stroke-width="2" stroke-linecap="round" stroke-linejoin="round"><path d="M8 3.6H2.6A1.4 1.4 0 0 0 1.2 5V17A1.4 1.4 0 0 0 2.6 18.4H14.6A1.4 1.4 0 0 0 16 17V11.6"/><path d="M12 1.2H18.6V7.8M18.2 1.6L8 11.8"/></svg>
<span class="t" style="left:1760.25px;top:603px;font-size:17.6px;letter-spacing:-0.058px;transform:scaleX(0.9909);font-weight:700;color:#0b6cff;">Log File</span>
<svg class="i" style="left:1876px;top:597.5px;" width="27" height="27.5" viewBox="0 0 27 27.5" fill="none" stroke="#3d8ef7" stroke-width="1.9" stroke-linecap="round" stroke-linejoin="round"><path d="M4 8.7V6.6L9.4 1H20.5A1.5 1.5 0 0 1 22 2.5V8.7"/><path d="M10 1.6V7H4.4"/><rect x="0.2" y="11.3" width="26.5" height="10" rx="1.2" fill="#3d8ef7" stroke="none"/><path d="M4 24V24.7A1.5 1.5 0 0 0 5.5 26.2H20.5A1.5 1.5 0 0 0 22 24.7V24"/><text x="13.4" y="19.2" font-family="Liberation Sans, sans-serif" font-size="7.2" font-weight="700" fill="#fff" stroke="none" text-anchor="middle" textLength="22" lengthAdjust="spacingAndGlyphs">JSON</text></svg>
<svg class="i" style="left:1930px;top:597.5px;" width="26" height="27.5" viewBox="0 0 26 27.5" fill="none" stroke="#3d8ef7" stroke-width="1.9" stroke-linecap="round" stroke-linejoin="round"><path d="M1 6.6L6.4 1H17.5A1.5 1.5 0 0 1 19 2.5V8M1 6.6V24.7A1.5 1.5 0 0 0 2.5 26.2H17.5A1.5 1.5 0 0 0 19 24.7V23"/><path d="M7 1.6V7H1.4"/><rect x="4.8" y="10.6" width="20.6" height="9.8" rx="1" fill="#3d8ef7" stroke="none"/><text x="15.1" y="18.3" font-family="Liberation Sans, sans-serif" font-size="7.2" font-weight="700" fill="#fff" stroke="none" text-anchor="middle" textLength="15.5" lengthAdjust="spacingAndGlyphs">RTF</text></svg>
<span class="t m" style="left:1530.00px;top:677px;font-size:16.49px;color:#444;">1</span>
<div class="conn" style="left:1533px;top:705px;width:31px;height:26.600000000000023px"></div>
<div class="av" style="left:1555px;top:672.3px"></div><svg class="i" style="left:1565.2px;top:680px;" width="19.5" height="24.8" viewBox="0 0 19.5 24.8" fill="none" stroke="#5f7cd2" stroke-width="1.9" stroke-linecap="round" stroke-linejoin="round"><rect x="1" y="7.4" width="17.5" height="16.4" rx="0.8"/><path d="M9.75 7.4V2.2"/><circle cx="9.75" cy="1.6" r="1.1" fill="#5f7cd2"/><path d="M6 13H8M11.6 13H13.6" stroke-width="1.7"/><path d="M6.2 19.1H13.2" stroke-width="2"/></svg><div class="bub" style="left:1608px;top:672px;width:757px;height:59.7px"></div><span class="t m" style="left:1635.30px;top:691px;font-size:17.46px;letter-spacing:0.547px;transform:scaleX(1.1210);color:#141414;">Welcome to our new voice-enabled service line. I'll be your Virtual Assistant.</span>
<span class="t m" style="left:1529.00px;top:769px;font-size:16.49px;color:#444;">2</span>
<div class="conn" style="left:1533px;top:797px;width:31px;height:26.600000000000023px"></div>
<div class="av" style="left:1555px;top:764.3px"></div><svg class="i" style="left:1565.2px;top:772px;" width="19.5" height="24.8" viewBox="0 0 19.5 24.8" fill="none" stroke="#5f7cd2" stroke-width="1.9" stroke-linecap="round" stroke-linejoin="round"><rect x="1" y="7.4" width="17.5" height="16.4" rx="0.8"/><path d="M9.75 7.4V2.2"/><circle cx="9.75" cy="1.6" r="1.1" fill="#5f7cd2"/><path d="M6 13H8M11.6 13H13.6" stroke-width="1.7"/><path d="M6.2 19.1H13.2" stroke-width="2"/></svg><div class="bub" style="left:1608px;top:764px;width:241px;height:59.7px"></div><span class="t m" style="left:1634.30px;top:783px;font-size:17.46px;letter-spacing:0.616px;transform:scaleX(1.1192);color:#141414;">How can i help you?</span>
<span class="t m" style="left:1529.00px;top:866px;font-size:16.49px;color:#444;">3</span>
<div class="conn" style="left:1533px;top:893px;width:31px;height:105.60000000000002px"></div>
<div class="bub u" style="left:1622px;top:855.8px;width:1132px;height:72.4px"></div><span class="t m" style="left:1648.00px;top:873px;font-size:17.46px;letter-spacing:0.569px;transform:scaleX(1.1212);color:#141414;">hello there! i would like to know my account balance please. so my name is john doe and my pin number is 1234. if</span><span class="t m" style="left:1649.00px;top:896px;font-size:17.46px;letter-spacing:0.575px;transform:scaleX(1.1249);color:#141414;">you need my security number as well i can provide it for you.</span><svg class="i" style="left:1577px;top:873.3px;" width="15" height="10" viewBox="0 0 15 10" fill="none" stroke="#555" stroke-width="2.2" stroke-linecap="round" stroke-linejoin="round"><path d="M1.4 1.6L7.5 8L13.6 1.6"/></svg><span class="t m" style="left:1576.00px;top:908px;font-size:22.31px;transform:scaleX(1.2692);color:#5c5c5c;">#</span><div class="av u" style="left:2767px;top:848.8px"></div><svg class="i" style="left:2767px;top:848.8px;" width="40" height="40" viewBox="0 0 40 40" fill="none" stroke-linecap="round" stroke-linejoin="round"><circle cx="20" cy="14.2" r="5.2" fill="#fff"/><ellipse cx="20" cy="26.6" rx="10" ry="4.6" fill="#fff"/></svg><span class="t m" style="left:2770.70px;top:899px;font-size:13.87px;letter-spacing:-0.150px;transform:scaleX(0.9681);color:#666;">11:02</span>
<div class="av" style="left:1555px;top:939.1999999999999px"></div><svg class="i" style="left:1565.2px;top:946.9px;" width="19.5" height="24.8" viewBox="0 0 19.5 24.8" fill="none" stroke="#5f7cd2" stroke-width="1.9" stroke-linecap="round" stroke-linejoin="round"><rect x="1" y="7.4" width="17.5" height="16.4" rx="0.8"/><path d="M9.75 7.4V2.2"/><circle cx="9.75" cy="1.6" r="1.1" fill="#5f7cd2"/><path d="M6 13H8M11.6 13H13.6" stroke-width="1.7"/><path d="M6.2 19.1H13.2" stroke-width="2"/></svg><div class="bub" style="left:1608px;top:938.9px;width:344px;height:59.7px"></div><span class="t m" style="left:1634.30px;top:958px;font-size:17.46px;letter-spacing:0.378px;transform:scaleX(1.0759);color:#141414;">Your current balance is $1125.12.</span>
<span class="t m" style="left:1530.00px;top:1036px;font-size:16.49px;color:#444;">4</span>
<div class="conn" style="left:1533px;top:1064px;width:31px;height:26.59999999999991px"></div>
<div class="av" style="left:1555px;top:1031.3px"></div><svg class="i" style="left:1565.2px;top:1039px;" width="19.5" height="24.8" viewBox="0 0 19.5 24.8" fill="none" stroke="#5f7cd2" stroke-width="1.9" stroke-linecap="round" stroke-linejoin="round"><rect x="1" y="7.4" width="17.5" height="16.4" rx="0.8"/><path d="M9.75 7.4V2.2"/><circle cx="9.75" cy="1.6" r="1.1" fill="#5f7cd2"/><path d="M6 13H8M11.6 13H13.6" stroke-width="1.7"/><path d="M6.2 19.1H13.2" stroke-width="2"/></svg><div class="bub" style="left:1608px;top:1031px;width:443.5px;height:59.7px"></div><span class="t m" style="left:1633.30px;top:1050px;font-size:17.46px;letter-spacing:0.596px;transform:scaleX(1.1267);color:#141414;">Is there anything else i can help you with?</span>
<span class="t m" style="left:1529.50px;top:1133px;font-size:17.07px;color:#444;">5</span>
<div class="conn" style="left:1533px;top:1160.3px;width:31px;height:105.5px"></div>
<div class="bub u" style="left:1624px;top:1123.1px;width:1130px;height:72.7px"></div><span class="t m" style="left:1650.00px;top:1140px;font-size:17.46px;letter-spacing:0.550px;transform:scaleX(1.1231);color:#141414;">yes actually the main reason i call is to cancel my card. unfortunately i lost it somewhere and i'll need to make a</span><span class="t m" style="left:1649.00px;top:1163px;font-size:17.46px;letter-spacing:0.640px;transform:scaleX(1.1278);color:#141414;">new one or something. could you help me on that please?</span><svg class="i" style="left:1577px;top:1140.6px;" width="15" height="10" viewBox="0 0 15 10" fill="none" stroke="#555" stroke-width="2.2" stroke-linecap="round" stroke-linejoin="round"><path d="M1.4 1.6L7.5 8L13.6 1.6"/></svg><span class="t m" style="left:1576.00px;top:1174px;font-size:22.31px;transform:scaleX(1.2692);color:#5c5c5c;">#</span><div class="av u" style="left:2767px;top:1116.1px"></div><svg class="i" style="left:2767px;top:1116.1px;" width="40" height="40" viewBox="0 0 40 40" fill="none" stroke-linecap="round" stroke-linejoin="round"><circle cx="20" cy="14.2" r="5.2" fill="#fff"/><ellipse cx="20" cy="26.6" rx="10" ry="4.6" fill="#fff"/></svg><span class="t m" style="left:2770.70px;top:1166px;font-size:13.87px;letter-spacing:-0.150px;transform:scaleX(0.9681);color:#666;">11:02</span>
<div class="av" style="left:1555px;top:1206.3999999999999px"></div><svg class="i" style="left:1565.2px;top:1214.1px;" width="19.5" height="24.8" viewBox="0 0 19.5 24.8" fill="none" stroke="#5f7cd2" stroke-width="1.9" stroke-linecap="round" stroke-linejoin="round"><rect x="1" y="7.4" width="17.5" height="16.4" rx="0.8"/><path d="M9.75 7.4V2.2"/><circle cx="9.75" cy="1.6" r="1.1" fill="#5f7cd2"/><path d="M6 13H8M11.6 13H13.6" stroke-width="1.7"/><path d="M6.2 19.1H13.2" stroke-width="2"/></svg><div class="bub" style="left:1608px;top:1206.1px;width:498px;height:59.7px"></div><span class="t m" style="left:1634.30px;top:1226px;font-size:17.46px;letter-spacing:0.558px;transform:scaleX(1.1210);color:#141414;">Hold on while I transfer you to a Representative.</span>
<svg class="i" style="left:0px;top:1320px;" width="12" height="12" viewBox="0 0 12 12" fill="none" stroke-linecap="round" stroke-linejoin="round"><path d="M0 0V12H12A12 12 0 0 1 0 0Z" fill="#000"/></svg>
</body></html>
